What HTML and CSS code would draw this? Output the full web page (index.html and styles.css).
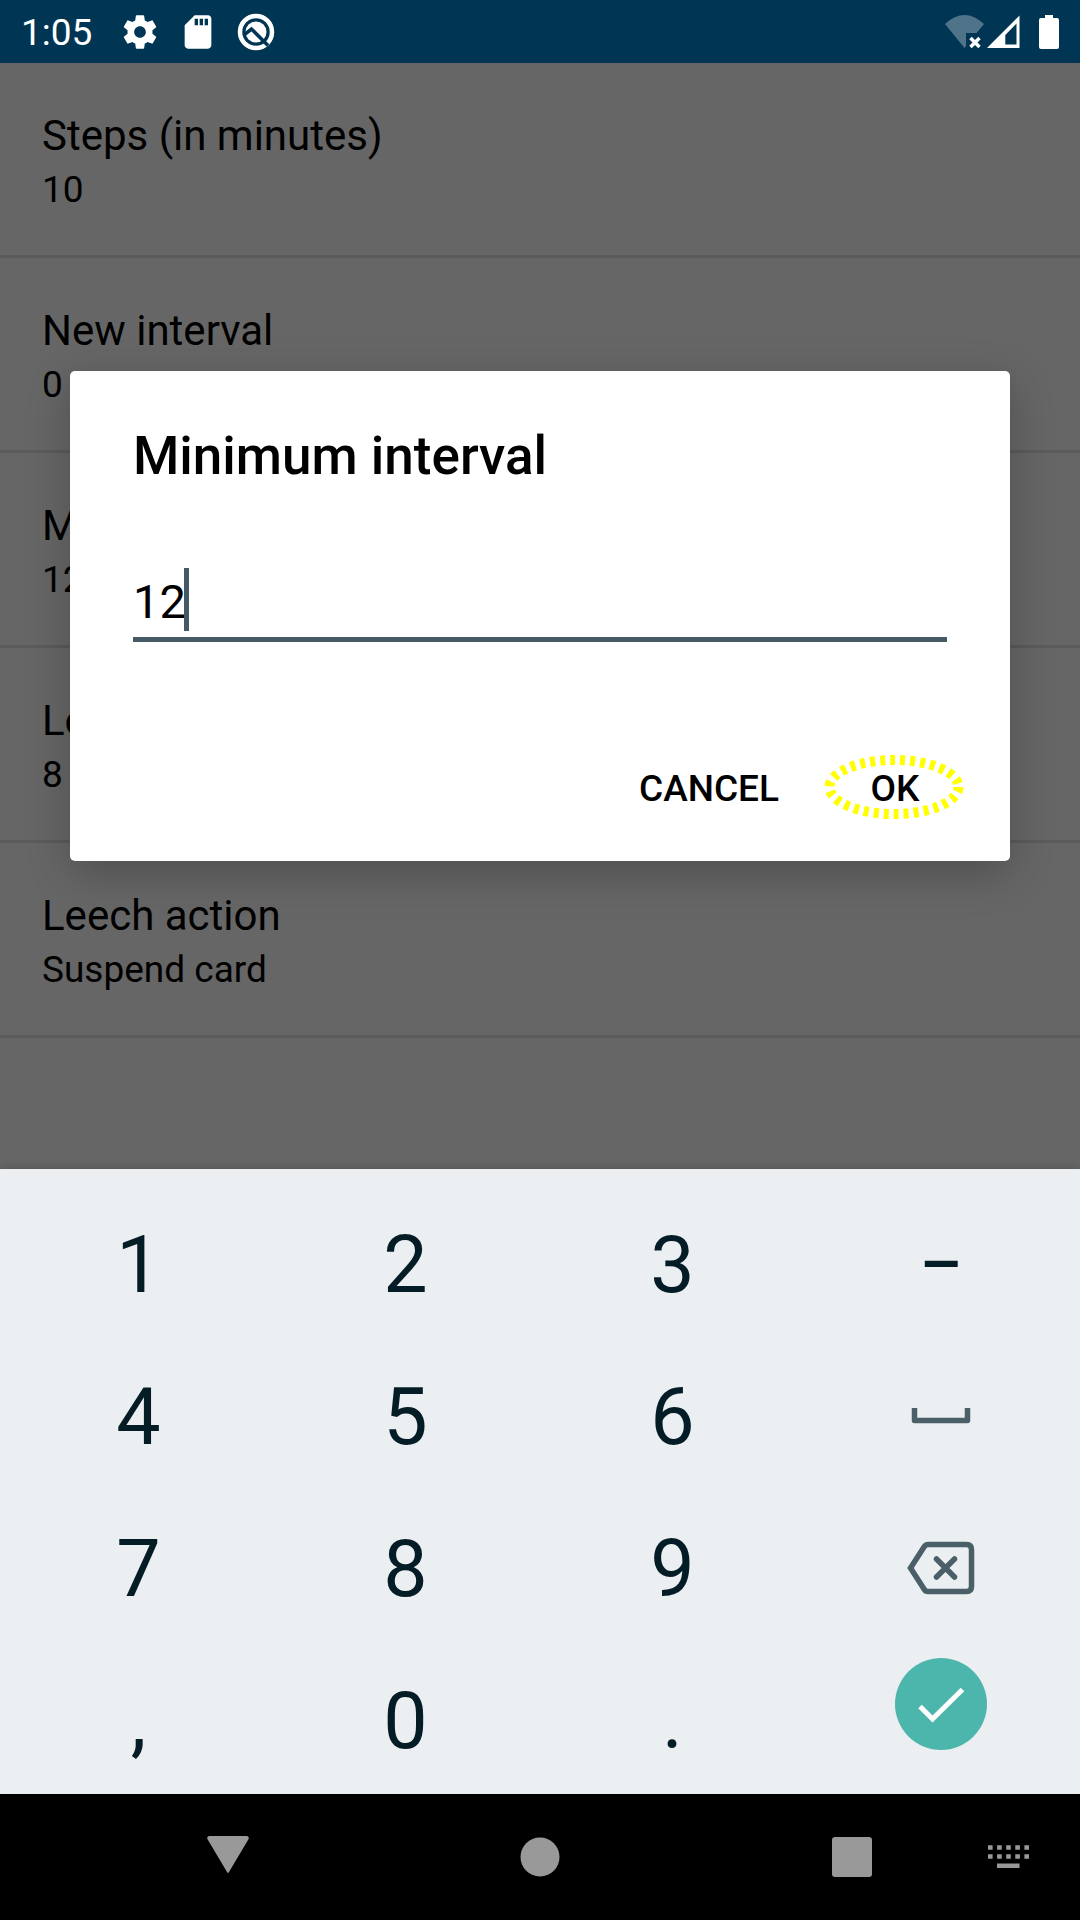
FILE: index.html
```html
<!DOCTYPE html>
<html lang="en">
<head>
<meta charset="utf-8">
<meta name="viewport" content="width=device-width, initial-scale=1">
<title>Minimum interval</title>
<link rel="stylesheet" href="styles.css">
</head>
<body>
<div class="screen">
  <header class="status">
    <span class="clock">1:05</span>
    <div class="notices">
      <svg width="40" height="40" viewBox="0 0 24 24" fill="#fff" aria-hidden="true"><path d="M19.43 12.98c.04-.32.07-.64.07-.98s-.03-.66-.07-.98l2.11-1.65c.19-.15.24-.42.12-.64l-2-3.46c-.12-.22-.39-.3-.61-.22l-2.49 1c-.52-.4-1.08-.73-1.69-.98l-.38-2.65C14.46 2.18 14.25 2 14 2h-4c-.25 0-.46.18-.49.42l-.38 2.65c-.61.25-1.17.59-1.69.98l-2.49-1c-.23-.09-.49 0-.61.22l-2 3.46c-.13.22-.07.49.12.64l2.11 1.65c-.04.32-.07.65-.07.98s.03.66.07.98l-2.11 1.65c-.19.15-.24.42-.12.64l2 3.46c.12.22.39.3.61.22l2.49-1c.52.4 1.08.73 1.69.98l.38 2.65c.03.24.24.42.49.42h4c.25 0 .46-.18.49-.42l.38-2.65c.61-.25 1.17-.59 1.69-.98l2.49 1c.23.09.49 0 .61-.22l2-3.46c.12-.22.07-.49-.12-.64l-2.11-1.65zM12 15.500c-1.930 0-3.500-1.570-3.500-3.500s1.570-3.500 3.500-3.500 3.500 1.570 3.500 3.500-1.570 3.500-3.500 3.500z"/></svg>
      <svg width="40" height="40" viewBox="0 0 24 24" fill="#fff" aria-hidden="true"><path d="M18 2h-8L4 8v12c0 1.100.9 2 2 2h12c1.100 0 2-.9 2-2V4c0-1.100-.9-2-2-2zm-6 6h-2V4h2v4zm3 0h-2V4h2v4zm3 0h-2V4h2v4z"/></svg>
      <svg width="40" height="40" viewBox="0 0 40 40" fill="none" aria-hidden="true"><circle cx="20" cy="20" r="16" stroke="#fff" stroke-width="4.500"/><circle cx="20" cy="20" r="10.500" fill="#fff"/><path d="M8.500 22.500L15.500 17L32 33.500" stroke="#003653" stroke-width="3.500"/></svg>
    </div>
    <div class="signals">
      <svg width="40" height="34" viewBox="0 0 40 34" aria-hidden="true"><path fill="#4f748a" d="M0 9Q19.500-9 39 9L31.500 18H21V31L19.500 33Z"/><path d="M25.500 23l9 9M34.500 23l-9 9" stroke="#fff" stroke-width="3.500"/></svg>
      <svg class="cell" width="33" height="34" viewBox="0 0 33 34" aria-hidden="true"><path fill="#fff" fill-rule="evenodd" d="M0 33H32.500V.5ZM18.300 20V29.500H29.500V8.500Z"/></svg>
      <svg width="20" height="34" viewBox="0 0 20 34" aria-hidden="true"><path fill="#fff" d="M6 0h8v3h4a2 2 0 0 1 2 2v27a2 2 0 0 1-2 2H2a2 2 0 0 1-2-2V5a2 2 0 0 1 2-2h4Z"/></svg>
    </div>
  </header>

  <main class="content">
    <ul class="prefs">
      <li class="pref"><span class="pref-title">Steps (in minutes)</span><span class="pref-value">10</span></li>
      <li class="pref"><span class="pref-title">New interval</span><span class="pref-value">0 %</span></li>
      <li class="pref"><span class="pref-title">Minimum interval</span><span class="pref-value">12</span></li>
      <li class="pref"><span class="pref-title">Leech threshold</span><span class="pref-value">8</span></li>
      <li class="pref"><span class="pref-title">Leech action</span><span class="pref-value">Suspend card</span></li>
    </ul>
    <div class="overlay">
      <section class="dialog" role="dialog" aria-labelledby="dialog-title">
        <h1 class="dialog-title" id="dialog-title">Minimum interval</h1>
        <div class="field">
          <input class="field-input" type="text" inputmode="numeric" value="12" aria-labelledby="dialog-title">
          <span class="caret"></span>
        </div>
        <div class="actions">
          <button class="action" type="button">CANCEL</button>
          <button class="action action-ok" type="button">OK
            <svg class="ring" width="140" height="66" viewBox="0 0 140 66" fill="none" aria-hidden="true"><ellipse cx="70" cy="33" rx="64.500" ry="27" stroke="#ff0" stroke-width="10" stroke-dasharray="5 5.020"/></svg>
          </button>
        </div>
      </section>
    </div>
  </main>

  <section class="keyboard" aria-label="Numeric keyboard">
    <button class="key" type="button">1</button>
    <button class="key" type="button">2</button>
    <button class="key" type="button">3</button>
    <button class="key key-dash" type="button">–</button>
    <button class="key" type="button">4</button>
    <button class="key" type="button">5</button>
    <button class="key" type="button">6</button>
    <button class="key key-icon" type="button" aria-label="Space"><svg width="60" height="16" viewBox="0 0 60 16" fill="none"><path d="M3.500 0V12.500H56.500V0" stroke="#4b5f68" stroke-width="5.500" stroke-linejoin="round"/></svg></button>
    <button class="key" type="button">7</button>
    <button class="key" type="button">8</button>
    <button class="key" type="button">9</button>
    <button class="key key-icon" type="button" aria-label="Delete"><svg width="68" height="54" viewBox="0 0 68 54" fill="none" stroke="#4b5f68" stroke-width="5.500"><path d="M21 3.500H59.500Q64.500 3.500 64.500 8.500V45.500Q64.500 50.500 59.500 50.500H21Q18.500 50.500 17 48L3.500 27L17 6Q18.500 3.500 21 3.500Z"/><path d="M29.500 18L47.500 36M47.500 18L29.500 36" stroke-linecap="round"/></svg></button>
    <button class="key" type="button">,</button>
    <button class="key" type="button">0</button>
    <button class="key" type="button">.</button>
    <button class="key key-done" type="button" aria-label="Done"><svg width="92" height="92" viewBox="0 0 92 92" fill="none"><circle cx="46" cy="46" r="46" fill="#4db6ac"/><path d="M25 48.500L37.500 61L67.500 31.500" stroke="#fff" stroke-width="5"/></svg></button>
  </section>

  <nav class="navbar" aria-label="System">
    <button class="nav-button nav-back" type="button" aria-label="Back"><svg width="42" height="42" viewBox="0 0 42 42"><path fill="#999" d="M2 0H40Q43 1 41 4L22 36Q21 38 20 36L1 4Q-1 1 2 0Z"/></svg></button>
    <button class="nav-button nav-home" type="button" aria-label="Home"><svg width="40" height="40" viewBox="0 0 40 40"><circle cx="20" cy="20" r="19.500" fill="#999"/></svg></button>
    <button class="nav-button nav-recent" type="button" aria-label="Recent apps"><svg width="40" height="40" viewBox="0 0 40 40"><rect width="40" height="40" rx="3" fill="#999"/></svg></button>
    <button class="nav-button nav-ime" type="button" aria-label="Choose keyboard"><svg width="41" height="24" viewBox="0 0 41 24"><path d="M0 2.500H41M0 11.500H41" stroke="#999" stroke-width="4.500" stroke-dasharray="4.600 4.500"/><path fill="#999" d="M9 18.500h22.500v4.500H9z"/></svg></button>
  </nav>
</div>
</body>
</html>
```
FILE: styles.css
```css
* {
  box-sizing: border-box;
}

body {
  margin: 0;
  background: #000;
  font-family: Roboto, "Noto Sans", sans-serif;
  color: #000;
}

button {
  margin: 0;
  padding: 0;
  border: 0;
  background: none;
  font: inherit;
  color: inherit;
}

svg {
  display: block;
  flex: none;
}

.screen {
  display: flex;
  flex-direction: column;
  min-height: 100vh;
}

/* Status bar */
.status {
  display: flex;
  align-items: center;
  height: 63px;
  padding: 0 21px;
  background: #003653;
  color: #fff;
}

.clock {
  width: 99px;
  padding-top: 2px;
  font-size: 37px;
  line-height: 44px;
}

.notices {
  display: flex;
  gap: 18px;
}

.signals {
  display: flex;
  gap: 2px;
  margin-left: auto;
}

.cell {
  margin-right: 17px;
}

/* Settings list */
.content {
  position: relative;
  flex: 1;
  background: #666;
}

.prefs {
  margin: 0;
  padding: 0;
  list-style: none;
}

.pref {
  display: flex;
  flex-direction: column;
  height: 195px;
  padding: 47px 42px 0;
  border-bottom: 3px solid #5b5b5b;
}

.pref-title {
  font-size: 42px;
  line-height: 52px;
}

.pref-value {
  font-size: 37px;
  line-height: 56px;
}

/* Dialog */
.overlay {
  position: absolute;
  inset: 0;
  display: flex;
  align-items: center;
  padding: 0 70px;
}

.dialog {
  flex: 1;
  padding: 49px 63px 32px;
  border-radius: 5px;
  background: #fff;
  box-shadow: 0 12px 44px rgba(0, 0, 0, 0.24);
}

.dialog-title {
  margin: 0 0 76px;
  font-size: 53px;
  font-weight: 500;
  line-height: 72px;
}

.field {
  position: relative;
  border-bottom: 5px solid #455a64;
}

.field-input {
  display: block;
  width: 100%;
  height: 69px;
  padding: 0 0 2px;
  border: 0;
  outline: 0;
  background: none;
  font: inherit;
  font-size: 47px;
  color: inherit;
}

.caret {
  position: absolute;
  top: 0;
  left: 51px;
  width: 5px;
  height: 63px;
  background: #455a64;
}

.actions {
  display: flex;
  justify-content: flex-end;
  gap: 48px;
  padding-top: 105px;
}

.action {
  position: relative;
  height: 82px;
  font-size: 37px;
  font-weight: 500;
}

.action-ok {
  width: 136px;
  margin-right: -16px;
}

.ring {
  position: absolute;
  top: 7px;
  left: -3px;
}

/* Keyboard */
.keyboard {
  position: relative;
  display: grid;
  grid-template-columns: 267fr 267fr 267fr 270fr;
  grid-auto-rows: 152px;
  height: 625px;
  padding: 20px 4px 0 5px;
  background: #eceff1;
  box-shadow: 0 -2px 8px rgba(0, 0, 0, 0.16);
}

.key {
  display: flex;
  align-items: center;
  justify-content: center;
  font-size: 79px;
  line-height: 96px;
  color: #041c26;
}

.key-dash {
  font-size: 66px;
  font-weight: 500;
}

.key-icon {
  padding-bottom: 2px;
}

.key-done {
  padding-bottom: 34px;
}

/* Navigation bar */
.navbar {
  display: grid;
  grid-template-columns: 6fr 7fr 6fr 7fr 6fr 7fr 6fr;
  height: 126px;
  background: #000;
}

.nav-button {
  display: flex;
  align-items: center;
  justify-content: center;
}

.nav-back {
  grid-column: 2;
}

.nav-home {
  grid-column: 4;
}

.nav-recent {
  grid-column: 6;
}

.nav-ime {
  grid-column: 7;
}
```
